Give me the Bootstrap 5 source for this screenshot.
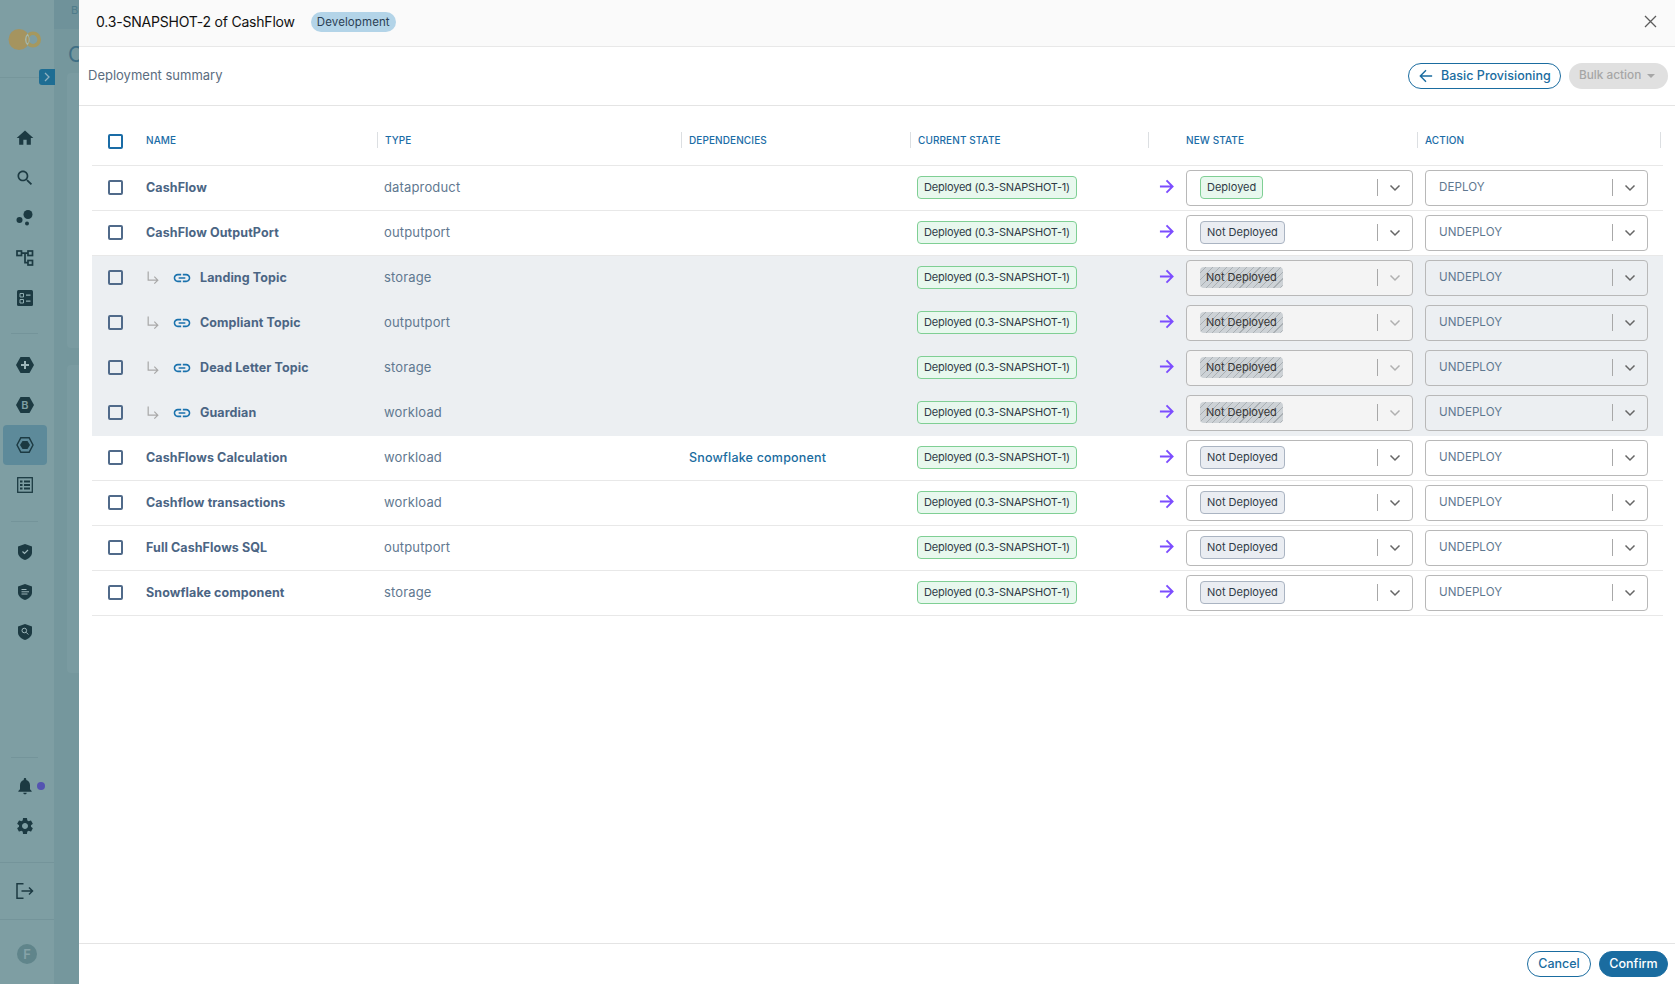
<!DOCTYPE html>
<html lang="en">

<head>
    <meta charset="UTF-8">
    <title>Deployment summary</title>
    <link href="https://cdn.jsdelivr.net/npm/bootstrap@5.3.0/dist/css/bootstrap.min.css" rel="stylesheet">
    <style>
        html, body { height: 100%; }
        body { font-family: Inter, "Liberation Sans", sans-serif; overflow: hidden; background: #7e9ea3; }

        /* left rail, dimmed by the backdrop */
        .rail { width: 54px; height: 984px; flex: none; background: #7e9ea3; color: #1c3a42; }
        .rail-logo { height: 69px; padding: 26px 0 0 8px; }
        .rail-toggle { width: 16px; height: 16px; margin-left: 39px; background: #1e6d93; border-radius: 3px 0 0 3px; display: flex; align-items: center; justify-content: center; position: relative; z-index: 1; }
        .rail-gap { height: 41px; margin-top: -8px; border-top: 1px solid #76969b; }
        .rail-btn { width: 44px; height: 40px; margin-left: 3px; display: flex; align-items: center; justify-content: center; border-radius: 4px; }
        .rail-btn.is-on { background: #5d8a9a; }
        .rail-line { border-top: 1px solid #74949a; width: 27px; margin-left: 11px; }
        .rail-line.one { margin-top: 15px; margin-bottom: 11px; }
        .rail-line.two { margin-top: 16px; margin-bottom: 10px; }
        .rail-rule { border-top: 1px solid #74949a; }
        .rail-dot { width: 8px; height: 8px; background: #5453b1; border-radius: 50%; margin-left: 2px; margin-right: -10px; }
        .rail-avatar { width: 20px; height: 20px; border-radius: 50%; background: #60858b; color: #86a3a8; font-size: 13px; font-weight: 600; line-height: 20px; text-align: center; }

        /* page peeking out behind the drawer */
        .behind { width: 25px; height: 984px; flex: none; background: #75979d; overflow: hidden; }
        .behind-top { height: 29px; background: #6f929a; color: #4e7c8a; font-size: 11px; padding: 2px 0 0 17px; white-space: nowrap; }
        .behind-title { height: 44px; padding: 11px 0 0 14px; color: #3f6f85; font-size: 21px; line-height: 30px; }
        .behind-card { margin-left: 13px; background: #7a9ba1; border-radius: 4px 0 0 4px; height: 275px; margin-bottom: 17px; }
        .behind-card.tall { height: 308px; }

        /* drawer */
        .drawer { flex: 1 1 auto; height: 984px; background: #fff; display: flex; flex-direction: column; min-width: 0; }
        .drawer-head { height: 47px; flex: none; background: #fafafa; border-bottom: 1px solid #e8e8e8; padding: 0 18px 4px 17px; }
        .drawer-title { font-size: 14px; color: #111; letter-spacing: -.2px; }
        .env-pill { background: #b3d4e8; color: #2b4054; font-size: 11.5px; line-height: 20px; border-radius: 10px; padding: 0 6px; margin: 2px 0 0 16px; letter-spacing: .1px; }
        .drawer-sub { height: 59px; flex: none; border-bottom: 1.5px solid #e4e4e4; padding: 0 7px 0 9px; }
        .sub-title { font-size: 13px; color: #5b6d80; }
        .pill-btn { height: 26px; border-radius: 13px; font-size: 12.5px; font-weight: 500; display: inline-flex; align-items: center; white-space: nowrap; padding: 0; }
        .pill-outline { border: 1px solid #1a6ca0; color: #1a6ca0; background: #fff; }
        .pill-solid { border: 1px solid #1a6ca0; background: #1a6ca0; color: #fff; }
        .pill-off { background: #e0e0e0; color: #a6a6a6; border: 0; }
        .btn-basic { width: 153px; padding-left: 10px; gap: 8px; letter-spacing: .02px; }
        .btn-bulk { width: 99px; padding-left: 10px; gap: 6px; font-size: 11.8px; }
        .btn-cancel { width: 64px; justify-content: center; }
        .btn-confirm { width: 69px; justify-content: center; }
        .caret-down { width: 0; height: 0; border-left: 4px solid transparent; border-right: 4px solid transparent; border-top: 4px solid #a6a6a6; }

        .table-wrap { flex: 1 1 auto; padding: 0 12px 0 13px; }
        .deploy-table { --bs-table-bg: transparent; table-layout: fixed; width: 1571px; margin: 0; border-collapse: collapse; }
        .deploy-table th { height: 59px; padding: 10px 0 0; border-bottom: 1.5px solid #e8e8e8; vertical-align: middle; font-size: 10px; font-weight: 500; color: #1a6ca6; text-transform: uppercase; letter-spacing: .1px; }
        .head-cell { height: 16px; line-height: 16px; padding-left: 7px; border-left: 1px solid #dcdfe2; white-space: nowrap; }
        .head-cell.first { border-left: 0; }
        .head-cell.wide { padding-left: 37px; }
        .head-cell.last { margin-right: 2px; border-right: 1px solid #dcdfe2; }
        .deploy-table td { height: 45px; padding: 0 0 0 7px; border-bottom: 1.5px solid #e8e8e8; vertical-align: middle; font-size: 13px; color: #5f7890; white-space: nowrap; letter-spacing: .15px; }
        .deploy-table td.chk { padding-left: 16px; }
        .deploy-table td.act { padding-left: 8px; }
        .deploy-table td.name { font-weight: 700; color: #4b6584; font-size: 12.5px; letter-spacing: .1px; padding-top: 1px; }
        .deploy-table th.chk { padding-left: 16px; }
        .deploy-table tr.child td { background: #eceff2; border-bottom-color: #eceff2; }
        .dep-link { color: #1a6ca0; font-weight: 500; text-decoration: none; font-size: 12.5px; letter-spacing: .2px; margin-left: 1px; }

        .tick { width: 15px; height: 15px; margin: 0; border: 2px solid #506a8a; border-radius: 2px; background-color: transparent; display: block; }
        .tick.head { border-color: #1a6ca6; margin-top: 2px; }
        .branch { gap: 8px; }
        .branch-arrow { margin-right: 4px; color: #a9a9a9; }
        .link-glyph { fill: #1a72ad; }

        .state-tag { display: inline-block; height: 23px; line-height: 21px; padding: 0 6px; border-radius: 4px; font-size: 11px; color: #2f3b46; border: 1px solid #7fcf94; background: #e8f8ee; white-space: nowrap; letter-spacing: 0; }
        .state-tag.long { letter-spacing: -.2px; }
        .state-tag.off { border-color: #aab4c2; background: #eaedf2; }
        .state-tag.hatched { height: 21px; line-height: 21px; border: 0; color: #333; background: repeating-linear-gradient(135deg, #cdd2d6 0 4px, #aab0b4 4px 4.8px); }
        .new-cell { padding-left: 11px; gap: 12px; }
        .go-arrow { color: #7c4dff; margin-bottom: 3px; flex: none; }
        .fake-select { height: 36px; display: flex; align-items: center; background: #fff; border: 1px solid #b8b8b8; border-radius: 4px; flex: none; }
        .fake-select.state { width: 227px; padding-left: 13px; }
        .fake-select.action { width: 223px; padding-left: 13px; font-size: 11.6px; color: #5f7890; letter-spacing: .05px; }
        .fake-select.state.locked { background: #f4f4f4; }
        .fake-select.action.locked { background: transparent; }
        .sel-end { margin-left: auto; height: 17px; border-left: 1px solid #a8a8a8; width: 35px; display: flex; align-items: center; justify-content: center; flex: none; color: #666; }
        .locked.state .sel-end { color: #b0b0b0; }

        .drawer-foot { height: 41px; flex: none; border-top: 1.5px solid #e4e4e4; padding: 0 7px 0 0; gap: 8px; }
    </style>
</head>

<body class="d-flex">

    <svg width="0" height="0" class="d-none">
        <symbol id="i-home" viewBox="0 0 24 24"><path d="M10 20v-6h4v6h5v-8h3L12 3 2 12h3v8z"/></symbol>
        <symbol id="i-search" viewBox="0 0 24 24"><path d="M15.5 14h-.79l-.28-.27C15.41 12.59 16 11.11 16 9.5 16 5.91 13.09 3 9.5 3S3 5.91 3 9.5 5.91 16 9.5 16c1.61 0 3.09-.59 4.23-1.57l.27.28v.79l5 4.99L20.49 19l-4.99-5zm-6 0C7.01 14 5 11.99 5 9.5S7.01 5 9.5 5 14 7.01 14 9.5 11.99 14 9.5 14z"/></symbol>
        <symbol id="i-link" viewBox="0 0 24 24"><path d="M3.9 12c0-1.71 1.39-3.1 3.1-3.1h4V7H7c-2.76 0-5 2.24-5 5s2.24 5 5 5h4v-1.9H7c-1.71 0-3.1-1.39-3.1-3.1zM8 13h8v-2H8v2zm9-6h-4v1.9h4c1.71 0 3.1 1.39 3.1 3.1s-1.39 3.1-3.1 3.1h-4V17h4c2.76 0 5-2.24 5-5s-2.24-5-5-5z"/></symbol>
        <symbol id="i-branch" viewBox="0 0 16 18"><path d="M2.5 1.500v10h11M9.500 7.500l4 4-4 4" fill="none" stroke="currentColor" stroke-width="1.400"/></symbol>
        <symbol id="i-go" viewBox="0 0 16 16"><path d="M1 8h13M8 1.500 14.500 8 8 14.500" fill="none" stroke="currentColor" stroke-width="2"/></symbol>
        <symbol id="i-chev" viewBox="0 0 12 8"><path d="M1.500 1.500 6 6l4.500-4.500" fill="none" stroke="currentColor" stroke-width="1.500"/></symbol>
    </svg>

    <!-- rail -->
    <nav class="rail d-flex flex-column">
        <div class="rail-logo">
            <svg width="34" height="23" viewBox="0 0 34 23"><circle cx="11" cy="11.500" r="10.500" fill="#a5945f"/><circle cx="25" cy="11.500" r="6.200" fill="none" stroke="#a5985f" stroke-width="3.600"/><path d="M19.640 5.540A10.500 10.500 0 0 1 19.640 17.460 8 8 0 0 1 19.640 5.540z" fill="#a3b8ae"/><ellipse cx="19.600" cy="11.500" rx="1.100" ry="3.600" fill="#a5945f"/></svg>
        </div>
        <div class="rail-toggle"><svg width="6" height="10" viewBox="0 0 6 10"><path d="M1 1l4 4-4 4" fill="none" stroke="#8fb0c0" stroke-width="1.300"/></svg></div>
        <div class="rail-gap"></div>
        <div class="rail-btn"><svg width="20" height="20" fill="currentColor"><use href="#i-home"/></svg></div>
        <div class="rail-btn"><svg width="20" height="20" fill="currentColor"><use href="#i-search"/></svg></div>
        <div class="rail-btn"><svg width="18" height="18" viewBox="0 0 18 18" fill="currentColor"><circle cx="3.500" cy="11" r="3"/><circle cx="12" cy="5.500" r="4.500"/><circle cx="11" cy="14.500" r="2"/></svg></div>
        <div class="rail-btn"><svg width="18" height="18" viewBox="0 0 18 18" fill="none" stroke="currentColor" stroke-width="1.700"><rect x="1" y="2" width="4.500" height="4.500"/><rect x="12" y="2" width="4.500" height="4.500"/><rect x="12" y="11.500" width="4.500" height="4.500"/><path d="M5.500 4.200H12M9 4.200v9.500h3"/></svg></div>
        <div class="rail-btn"><svg width="16" height="16" viewBox="0 0 16 16"><rect width="16" height="16" rx="1.500" fill="currentColor"/><path d="M3 3.500h3.500V7H3zM3 9.500h3.500V13H3z" fill="none" stroke="#8fadb1" stroke-width="1"/><path d="M9 5.200h4.500M9 11.200h4.500" stroke="#8fadb1" stroke-width="1.300"/></svg></div>
        <div class="rail-line one"></div>
        <div class="rail-btn"><svg width="18" height="16" viewBox="0 0 18 16"><path d="M4.500 0h9L18 8l-4.500 8h-9L0 8z" fill="currentColor"/><path d="M9 4v8M5 8h8" stroke="#9db6ba" stroke-width="2"/></svg></div>
        <div class="rail-btn"><svg width="18" height="16" viewBox="0 0 18 16"><path d="M4.500 0h9L18 8l-4.500 8h-9L0 8z" fill="currentColor"/><text x="9" y="12" text-anchor="middle" font-size="11" font-weight="600" fill="#7e9ea3" font-family="Inter, sans-serif">B</text></svg></div>
        <div class="rail-btn is-on"><svg width="18" height="16" viewBox="0 0 18 16"><path d="M4.800.8h8.400L17 8l-3.800 7.200H4.800L1 8z" fill="none" stroke="currentColor" stroke-width="1.400"/><path d="M6.500 4h5L14 8l-2.500 4h-5L4 8z" fill="currentColor"/></svg></div>
        <div class="rail-btn"><svg width="16" height="16" viewBox="0 0 16 16" fill="none" stroke="currentColor" stroke-width="1.300"><rect x=".7" y=".7" width="14.600" height="14.600"/><path d="M3 4.500h2.500M7 4.500h6M3 8h2.500M7 8h6M3 11.500h2.500M7 11.500h6" stroke-width="1.800"/></svg></div>
        <div class="rail-line two"></div>
        <div class="rail-btn"><svg width="14" height="16" viewBox="0 0 14 16"><path d="M7 0l7 2.500v6c0 3.500-3 6-7 7.500-4-1.500-7-4-7-7.500v-6z" fill="currentColor"/><path d="M4.500 7.500l2 2 3.500-3.500" fill="none" stroke="#9db6ba" stroke-width="1.200"/></svg></div>
        <div class="rail-btn"><svg width="14" height="16" viewBox="0 0 14 16"><path d="M7 0l7 2.500v6c0 3.500-3 6-7 7.500-4-1.500-7-4-7-7.500v-6z" fill="currentColor"/><path d="M3.500 5.500h5M3.500 7.800h7.500M3.500 10h6" stroke="#9db6ba" stroke-width="1"/></svg></div>
        <div class="rail-btn"><svg width="14" height="16" viewBox="0 0 14 16"><path d="M7 0l7 2.500v6c0 3.500-3 6-7 7.500-4-1.500-7-4-7-7.500v-6z" fill="currentColor"/><circle cx="6.300" cy="6.500" r="2.300" fill="none" stroke="#9db6ba"/><path d="M8 8.200l2.300 2.300" stroke="#9db6ba"/></svg></div>
        <div class="flex-grow-1"></div>
        <div class="rail-line"></div>
        <div class="rail-btn mt-2"><svg width="20" height="20" viewBox="0 0 24 24" fill="currentColor"><path d="M12 22c1.100 0 2-.900 2-2h-4c0 1.100.900 2 2 2zm6-6v-5c0-3.070-1.630-5.640-4.500-6.320V4c0-.830-.670-1.500-1.500-1.500s-1.500.670-1.500 1.500v.680C7.640 5.360 6 7.920 6 11v5l-2 2v1h16v-1l-2-2z"/></svg><span class="rail-dot"></span></div>
        <div class="rail-btn"><svg width="20" height="20" viewBox="0 0 24 24" fill="currentColor"><path d="M19.14 12.94c.04-.3.06-.61.06-.94 0-.32-.02-.64-.07-.94l2.03-1.58c.18-.14.23-.41.12-.61l-1.92-3.32c-.12-.22-.37-.29-.59-.22l-2.39.96c-.5-.38-1.03-.7-1.62-.94l-.36-2.54c-.04-.24-.24-.41-.48-.41h-3.84c-.24 0-.43.17-.47.41l-.36 2.54c-.59.24-1.13.57-1.62.94l-2.39-.96c-.22-.08-.47 0-.59.22L2.74 8.870c-.12.21-.08.47.12.61l2.03 1.58c-.05.3-.09.63-.09.94s.02.64.07.94l-2.03 1.58c-.18.14-.23.41-.12.61l1.92 3.32c.12.22.37.29.59.22l2.39-.96c.5.38 1.03.7 1.62.94l.36 2.54c.05.24.24.41.48.41h3.84c.24 0 .44-.17.47-.41l.36-2.54c.59-.24 1.13-.56 1.62-.94l2.39.96c.22.08.47 0 .59-.22l1.92-3.32c.12-.22.07-.47-.12-.61l-2.01-1.58zM12 15.600c-1.98 0-3.600-1.620-3.600-3.600s1.620-3.600 3.600-3.600 3.600 1.620 3.600 3.600-1.620 3.600-3.600 3.600z"/></svg></div>
        <div class="rail-rule mt-3"></div>
        <div class="rail-btn my-2"><svg width="18" height="16" viewBox="0 0 18 16" fill="none" stroke="currentColor" stroke-width="1.500"><path d="M7.500.8H1v14.400h6.500M5.500 8H17M13 4.500 16.500 8 13 11.500"/></svg></div>
        <div class="rail-rule"></div>
        <div class="d-flex justify-content-center pt-4 pb-3 mb-1"><div class="rail-avatar">F</div></div>
    </nav>

    <div class="behind">
        <div class="behind-top">Bu</div>
        <div class="behind-title">C</div>
        <div class="behind-card"></div>
        <div class="behind-card tall"></div>
    </div>

    <!-- drawer -->
    <main class="drawer">
        <header class="drawer-head d-flex align-items-center">
            <span class="drawer-title">0.3-SNAPSHOT-2 of CashFlow</span>
            <span class="env-pill">Development</span>
            <svg class="ms-auto" width="13" height="13" viewBox="0 0 13 13"><path d="M1 1l11 11M12 1 1 12" stroke="#5c5c5c" stroke-width="1.300"/></svg>
        </header>

        <div class="drawer-sub d-flex align-items-center justify-content-between">
            <span class="sub-title">Deployment summary</span>
            <div class="d-flex gap-2">
                <button class="pill-btn pill-outline btn-basic" type="button">
                    <svg width="14" height="14" viewBox="0 0 16 16"><path d="M15 8H2M8 1.500 1.500 8 8 14.500" fill="none" stroke="currentColor" stroke-width="1.600"/></svg>
                    Basic Provisioning
                </button>
                <button class="pill-btn pill-off btn-bulk" type="button" disabled>Bulk action <span class="caret-down"></span></button>
            </div>
        </div>

        <div class="table-wrap">
            <table class="table deploy-table">
                <colgroup>
                    <col style="width:47px"><col style="width:238px"><col style="width:304px"><col style="width:229px"><col style="width:238px"><col style="width:269px"><col style="width:246px">
                </colgroup>
                <thead>
                    <tr>
                        <th class="chk"><span class="tick head"></span></th>
                        <th><div class="head-cell first">Name</div></th>
                        <th><div class="head-cell">Type</div></th>
                        <th><div class="head-cell">Dependencies</div></th>
                        <th><div class="head-cell">Current state</div></th>
                        <th><div class="head-cell wide">New state</div></th>
                        <th><div class="head-cell last">Action</div></th>
                    </tr>
                </thead>
                <tbody>
                    <tr>
                        <td class="chk"><span class="tick"></span></td>
                        <td class="name">CashFlow</td>
                        <td>dataproduct</td>
                        <td></td>
                        <td><span class="state-tag long">Deployed (0.3-SNAPSHOT-1)</span></td>
                        <td class="p-0"><div class="d-flex align-items-center new-cell"><svg class="go-arrow" width="15" height="15"><use href="#i-go"/></svg><div class="fake-select state"><span class="state-tag">Deployed</span><span class="sel-end"><svg width="12" height="8"><use href="#i-chev"/></svg></span></div></div></td>
                        <td class="act"><div class="fake-select action">DEPLOY<span class="sel-end"><svg width="12" height="8"><use href="#i-chev"/></svg></span></div></td>
                    </tr>
                    <tr>
                        <td class="chk"><span class="tick"></span></td>
                        <td class="name">CashFlow OutputPort</td>
                        <td>outputport</td>
                        <td></td>
                        <td><span class="state-tag long">Deployed (0.3-SNAPSHOT-1)</span></td>
                        <td class="p-0"><div class="d-flex align-items-center new-cell"><svg class="go-arrow" width="15" height="15"><use href="#i-go"/></svg><div class="fake-select state"><span class="state-tag off">Not Deployed</span><span class="sel-end"><svg width="12" height="8"><use href="#i-chev"/></svg></span></div></div></td>
                        <td class="act"><div class="fake-select action">UNDEPLOY<span class="sel-end"><svg width="12" height="8"><use href="#i-chev"/></svg></span></div></td>
                    </tr>
                    <tr class="child">
                        <td class="chk"><span class="tick"></span></td>
                        <td class="name"><div class="d-flex align-items-center branch"><svg class="branch-arrow" width="14" height="16"><use href="#i-branch"/></svg><svg class="link-glyph" width="20" height="20"><use href="#i-link"/></svg><span>Landing Topic</span></div></td>
                        <td>storage</td>
                        <td></td>
                        <td><span class="state-tag long">Deployed (0.3-SNAPSHOT-1)</span></td>
                        <td class="p-0"><div class="d-flex align-items-center new-cell"><svg class="go-arrow" width="15" height="15"><use href="#i-go"/></svg><div class="fake-select state locked"><span class="state-tag hatched">Not Deployed</span><span class="sel-end"><svg width="12" height="8"><use href="#i-chev"/></svg></span></div></div></td>
                        <td class="act"><div class="fake-select action locked">UNDEPLOY<span class="sel-end"><svg width="12" height="8"><use href="#i-chev"/></svg></span></div></td>
                    </tr>
                    <tr class="child">
                        <td class="chk"><span class="tick"></span></td>
                        <td class="name"><div class="d-flex align-items-center branch"><svg class="branch-arrow" width="14" height="16"><use href="#i-branch"/></svg><svg class="link-glyph" width="20" height="20"><use href="#i-link"/></svg><span>Compliant Topic</span></div></td>
                        <td>outputport</td>
                        <td></td>
                        <td><span class="state-tag long">Deployed (0.3-SNAPSHOT-1)</span></td>
                        <td class="p-0"><div class="d-flex align-items-center new-cell"><svg class="go-arrow" width="15" height="15"><use href="#i-go"/></svg><div class="fake-select state locked"><span class="state-tag hatched">Not Deployed</span><span class="sel-end"><svg width="12" height="8"><use href="#i-chev"/></svg></span></div></div></td>
                        <td class="act"><div class="fake-select action locked">UNDEPLOY<span class="sel-end"><svg width="12" height="8"><use href="#i-chev"/></svg></span></div></td>
                    </tr>
                    <tr class="child">
                        <td class="chk"><span class="tick"></span></td>
                        <td class="name"><div class="d-flex align-items-center branch"><svg class="branch-arrow" width="14" height="16"><use href="#i-branch"/></svg><svg class="link-glyph" width="20" height="20"><use href="#i-link"/></svg><span>Dead Letter Topic</span></div></td>
                        <td>storage</td>
                        <td></td>
                        <td><span class="state-tag long">Deployed (0.3-SNAPSHOT-1)</span></td>
                        <td class="p-0"><div class="d-flex align-items-center new-cell"><svg class="go-arrow" width="15" height="15"><use href="#i-go"/></svg><div class="fake-select state locked"><span class="state-tag hatched">Not Deployed</span><span class="sel-end"><svg width="12" height="8"><use href="#i-chev"/></svg></span></div></div></td>
                        <td class="act"><div class="fake-select action locked">UNDEPLOY<span class="sel-end"><svg width="12" height="8"><use href="#i-chev"/></svg></span></div></td>
                    </tr>
                    <tr class="child">
                        <td class="chk"><span class="tick"></span></td>
                        <td class="name"><div class="d-flex align-items-center branch"><svg class="branch-arrow" width="14" height="16"><use href="#i-branch"/></svg><svg class="link-glyph" width="20" height="20"><use href="#i-link"/></svg><span>Guardian</span></div></td>
                        <td>workload</td>
                        <td></td>
                        <td><span class="state-tag long">Deployed (0.3-SNAPSHOT-1)</span></td>
                        <td class="p-0"><div class="d-flex align-items-center new-cell"><svg class="go-arrow" width="15" height="15"><use href="#i-go"/></svg><div class="fake-select state locked"><span class="state-tag hatched">Not Deployed</span><span class="sel-end"><svg width="12" height="8"><use href="#i-chev"/></svg></span></div></div></td>
                        <td class="act"><div class="fake-select action locked">UNDEPLOY<span class="sel-end"><svg width="12" height="8"><use href="#i-chev"/></svg></span></div></td>
                    </tr>
                    <tr>
                        <td class="chk"><span class="tick"></span></td>
                        <td class="name">CashFlows Calculation</td>
                        <td>workload</td>
                        <td><a class="dep-link" href="#">Snowflake component</a></td>
                        <td><span class="state-tag long">Deployed (0.3-SNAPSHOT-1)</span></td>
                        <td class="p-0"><div class="d-flex align-items-center new-cell"><svg class="go-arrow" width="15" height="15"><use href="#i-go"/></svg><div class="fake-select state"><span class="state-tag off">Not Deployed</span><span class="sel-end"><svg width="12" height="8"><use href="#i-chev"/></svg></span></div></div></td>
                        <td class="act"><div class="fake-select action">UNDEPLOY<span class="sel-end"><svg width="12" height="8"><use href="#i-chev"/></svg></span></div></td>
                    </tr>
                    <tr>
                        <td class="chk"><span class="tick"></span></td>
                        <td class="name">Cashflow transactions</td>
                        <td>workload</td>
                        <td></td>
                        <td><span class="state-tag long">Deployed (0.3-SNAPSHOT-1)</span></td>
                        <td class="p-0"><div class="d-flex align-items-center new-cell"><svg class="go-arrow" width="15" height="15"><use href="#i-go"/></svg><div class="fake-select state"><span class="state-tag off">Not Deployed</span><span class="sel-end"><svg width="12" height="8"><use href="#i-chev"/></svg></span></div></div></td>
                        <td class="act"><div class="fake-select action">UNDEPLOY<span class="sel-end"><svg width="12" height="8"><use href="#i-chev"/></svg></span></div></td>
                    </tr>
                    <tr>
                        <td class="chk"><span class="tick"></span></td>
                        <td class="name">Full CashFlows SQL</td>
                        <td>outputport</td>
                        <td></td>
                        <td><span class="state-tag long">Deployed (0.3-SNAPSHOT-1)</span></td>
                        <td class="p-0"><div class="d-flex align-items-center new-cell"><svg class="go-arrow" width="15" height="15"><use href="#i-go"/></svg><div class="fake-select state"><span class="state-tag off">Not Deployed</span><span class="sel-end"><svg width="12" height="8"><use href="#i-chev"/></svg></span></div></div></td>
                        <td class="act"><div class="fake-select action">UNDEPLOY<span class="sel-end"><svg width="12" height="8"><use href="#i-chev"/></svg></span></div></td>
                    </tr>
                    <tr>
                        <td class="chk"><span class="tick"></span></td>
                        <td class="name">Snowflake component</td>
                        <td>storage</td>
                        <td></td>
                        <td><span class="state-tag long">Deployed (0.3-SNAPSHOT-1)</span></td>
                        <td class="p-0"><div class="d-flex align-items-center new-cell"><svg class="go-arrow" width="15" height="15"><use href="#i-go"/></svg><div class="fake-select state"><span class="state-tag off">Not Deployed</span><span class="sel-end"><svg width="12" height="8"><use href="#i-chev"/></svg></span></div></div></td>
                        <td class="act"><div class="fake-select action">UNDEPLOY<span class="sel-end"><svg width="12" height="8"><use href="#i-chev"/></svg></span></div></td>
                    </tr>
                </tbody>
            </table>
        </div>

        <footer class="drawer-foot d-flex align-items-center justify-content-end">
            <button class="pill-btn pill-outline btn-cancel" type="button">Cancel</button>
            <button class="pill-btn pill-solid btn-confirm" type="button">Confirm</button>
        </footer>
    </main>

    <script src="https://cdn.jsdelivr.net/npm/bootstrap@5.3.0/dist/js/bootstrap.bundle.min.js"></script>
</body>

</html>
